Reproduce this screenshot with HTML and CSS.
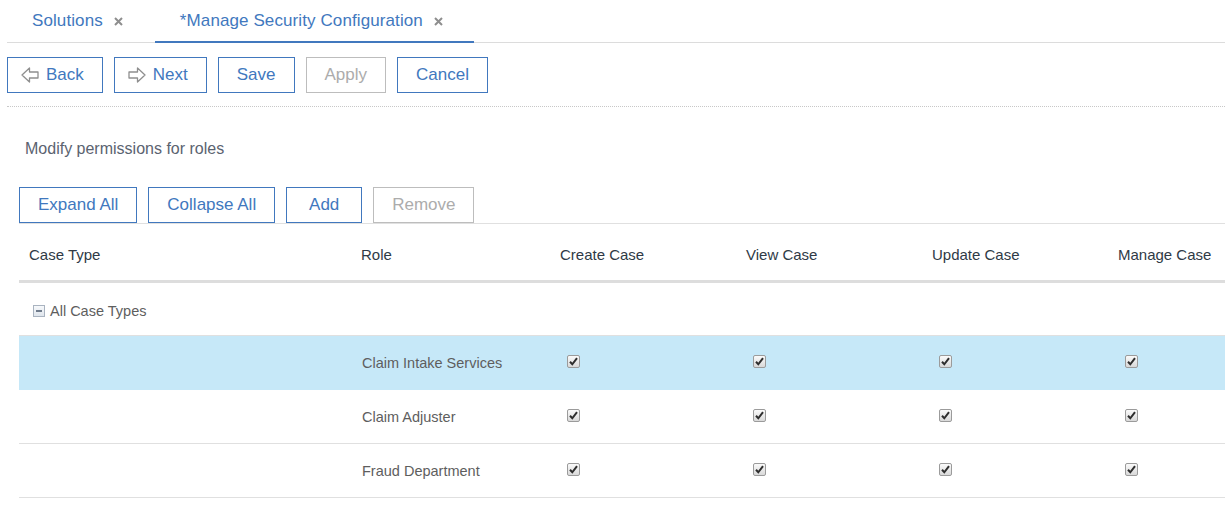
FILE: index.html
```html
<!DOCTYPE html>
<html>
<head>
<meta charset="utf-8">
<link rel="stylesheet" href="styles.css">
</head>
<body>
<div class="page">
  <div class="tabs">
    <div class="tab"><span class="tab-label">Solutions</span><svg class="x" width="9" height="9" viewBox="0 0 9 9"><path d="M1 1L8 8M8 1L1 8" stroke="#8e8e8e" stroke-width="2"/></svg></div>
    <div class="tab active"><span class="tab-label">*Manage Security Configuration</span><svg class="x" width="9" height="9" viewBox="0 0 9 9"><path d="M1 1L8 8M8 1L1 8" stroke="#8e8e8e" stroke-width="2"/></svg></div>
  </div>
  <div class="toolbar">
    <button class="btn icon"><svg width="18" height="16" viewBox="0 0 18 16"><path d="M1 8L8.5 1V5H17V11H8.5V15Z" fill="none" stroke="#8f8f8f" stroke-width="1.3" stroke-linejoin="round"/></svg>Back</button>
    <button class="btn icon"><svg width="18" height="16" viewBox="0 0 18 16"><path d="M17 8L9.5 1V5H1V11H9.5V15Z" fill="none" stroke="#8f8f8f" stroke-width="1.3" stroke-linejoin="round"/></svg>Next</button>
    <button class="btn">Save</button>
    <button class="btn disabled wide">Apply</button>
    <button class="btn">Cancel</button>
  </div>
  <div class="content">
    <p class="intro">Modify permissions for roles</p>
    <div class="actions">
      <button class="btn">Expand All</button>
      <button class="btn">Collapse All</button>
      <button class="btn">Add</button>
      <button class="btn disabled">Remove</button>
    </div>
    <div class="grid">
      <div class="row head">
        <div class="cell">Case Type</div>
        <div class="cell">Role</div>
        <div class="cell">Create Case</div>
        <div class="cell">View Case</div>
        <div class="cell">Update Case</div>
        <div class="cell">Manage Case</div>
      </div>
      <div class="row group">
        <div class="cell tree"><span class="toggle"><span class="minus"></span></span>All Case Types</div>
      </div>
      <div class="row item selected">
        <div class="cell"></div>
        <div class="cell">Claim Intake Services</div>
        <div class="cell chk"><span class="cb"><svg width="11" height="11" viewBox="0 0 11 11"><path d="M2 5.8L4.3 8.3L9 2.2" fill="none" stroke="#2e2e2e" stroke-width="2"/></svg></span></div>
        <div class="cell chk"><span class="cb"><svg width="11" height="11" viewBox="0 0 11 11"><path d="M2 5.8L4.3 8.3L9 2.2" fill="none" stroke="#2e2e2e" stroke-width="2"/></svg></span></div>
        <div class="cell chk"><span class="cb"><svg width="11" height="11" viewBox="0 0 11 11"><path d="M2 5.8L4.3 8.3L9 2.2" fill="none" stroke="#2e2e2e" stroke-width="2"/></svg></span></div>
        <div class="cell chk"><span class="cb"><svg width="11" height="11" viewBox="0 0 11 11"><path d="M2 5.8L4.3 8.3L9 2.2" fill="none" stroke="#2e2e2e" stroke-width="2"/></svg></span></div>
      </div>
      <div class="row item">
        <div class="cell"></div>
        <div class="cell">Claim Adjuster</div>
        <div class="cell chk"><span class="cb"><svg width="11" height="11" viewBox="0 0 11 11"><path d="M2 5.8L4.3 8.3L9 2.2" fill="none" stroke="#2e2e2e" stroke-width="2"/></svg></span></div>
        <div class="cell chk"><span class="cb"><svg width="11" height="11" viewBox="0 0 11 11"><path d="M2 5.8L4.3 8.3L9 2.2" fill="none" stroke="#2e2e2e" stroke-width="2"/></svg></span></div>
        <div class="cell chk"><span class="cb"><svg width="11" height="11" viewBox="0 0 11 11"><path d="M2 5.8L4.3 8.3L9 2.2" fill="none" stroke="#2e2e2e" stroke-width="2"/></svg></span></div>
        <div class="cell chk"><span class="cb"><svg width="11" height="11" viewBox="0 0 11 11"><path d="M2 5.8L4.3 8.3L9 2.2" fill="none" stroke="#2e2e2e" stroke-width="2"/></svg></span></div>
      </div>
      <div class="row item">
        <div class="cell"></div>
        <div class="cell">Fraud Department</div>
        <div class="cell chk"><span class="cb"><svg width="11" height="11" viewBox="0 0 11 11"><path d="M2 5.8L4.3 8.3L9 2.2" fill="none" stroke="#2e2e2e" stroke-width="2"/></svg></span></div>
        <div class="cell chk"><span class="cb"><svg width="11" height="11" viewBox="0 0 11 11"><path d="M2 5.8L4.3 8.3L9 2.2" fill="none" stroke="#2e2e2e" stroke-width="2"/></svg></span></div>
        <div class="cell chk"><span class="cb"><svg width="11" height="11" viewBox="0 0 11 11"><path d="M2 5.8L4.3 8.3L9 2.2" fill="none" stroke="#2e2e2e" stroke-width="2"/></svg></span></div>
        <div class="cell chk"><span class="cb"><svg width="11" height="11" viewBox="0 0 11 11"><path d="M2 5.8L4.3 8.3L9 2.2" fill="none" stroke="#2e2e2e" stroke-width="2"/></svg></span></div>
      </div>
    </div>
  </div>
</div>
</body>
</html>
```
FILE: styles.css
```css
* { box-sizing: border-box; }
html, body { margin: 0; padding: 0; background: #fff; }
body {
  font-family: "Liberation Sans", Arial, sans-serif;
  color: #333;
  overflow: hidden;
}
.page {
  padding-left: 7px;
  width: 1225px;
  overflow: hidden;
}
.tabs {
  display: flex;
  height: 43px;
  border-bottom: 1px solid #dcdcdc;
}
.tab {
  display: flex;
  align-items: center;
  gap: 11px;
  padding: 0 32px 0 25px;
  height: 42px;
  font-size: 17px;
  color: #4178be;
}
.tab-label { letter-spacing: 0.1px; }
.tab.active {
  border-bottom: 2px solid #4178be;
  height: 43px;
  padding-top: 1px;
  padding-right: 31px;
}
.tab .x { margin-top: 1px; }
.toolbar {
  display: flex;
  gap: 11px;
  padding: 14px 0 13px;
  border-bottom: 1px dotted #c8c8c8;
}
.btn {
  height: 36px;
  min-width: 76px;
  padding: 0 18px;
  border: 1px solid #4178be;
  background: #fff;
  color: #4178be;
  font-family: "Liberation Sans", Arial, sans-serif;
  font-size: 17px;
  display: flex;
  align-items: center;
  justify-content: center;
  gap: 7px;
  cursor: pointer;
}
.btn.icon { padding: 0 18px 0 13px; }
.btn.wide { min-width: 80px; }
.btn.disabled {
  border-color: #bdbdbd;
  color: #acacac;
}
.content {
  padding-left: 12px;
}
.intro {
  margin: 0;
  padding: 32px 0 0 6px;
  font-size: 16px;
  line-height: 20px;
  color: #5b6370;
}
.actions {
  display: flex;
  gap: 11px;
  margin-top: 28px;
}
.grid {
  border-top: 1px solid #e0e0e0;
  width: 1300px;
}
.row {
  display: grid;
  grid-template-columns: 332px 199px 186px 186px 186px 211px;
  align-items: center;
}
.cell {
  padding-left: 10px;
  white-space: nowrap;
}
.head {
  height: 59px;
  padding-top: 4px;
  border-bottom: 3px solid #dddddd;
  font-size: 15px;
  color: #2f3a46;
}
.group {
  height: 53px;
  padding-top: 3px;
  border-bottom: 1px solid #e0e0e0;
  font-size: 14.5px;
  color: #5e5e5e;
}
.tree {
  display: flex;
  align-items: center;
  padding-left: 14px;
}
.toggle {
  width: 12px;
  height: 12px;
  border: 1px solid #a9b3c0;
  background: linear-gradient(#f7f9fb, #dfe5ec);
  margin-right: 5px;
  display: flex;
  align-items: center;
  justify-content: center;
}
.minus {
  width: 6px;
  height: 2px;
  background: #6f7b8b;
}
.item {
  height: 54px;
  border-bottom: 1px solid #e0e0e0;
  font-size: 14.5px;
  color: #5e5e5e;
}
.item.selected {
  background: #c6e8f8;
  border-bottom-color: #c6e8f8;
}
.item .cell:nth-child(2) { padding-left: 11px; }
.chk {
  padding-left: 17px;
  display: flex;
  padding-bottom: 2px;
}
.cb {
  width: 13px;
  height: 13px;
  border: 1px solid #9b9b9b;
  border-radius: 2px;
  background: linear-gradient(#fafafa, #d9d9d9);
  display: flex;
  align-items: center;
  justify-content: center;
}
```
